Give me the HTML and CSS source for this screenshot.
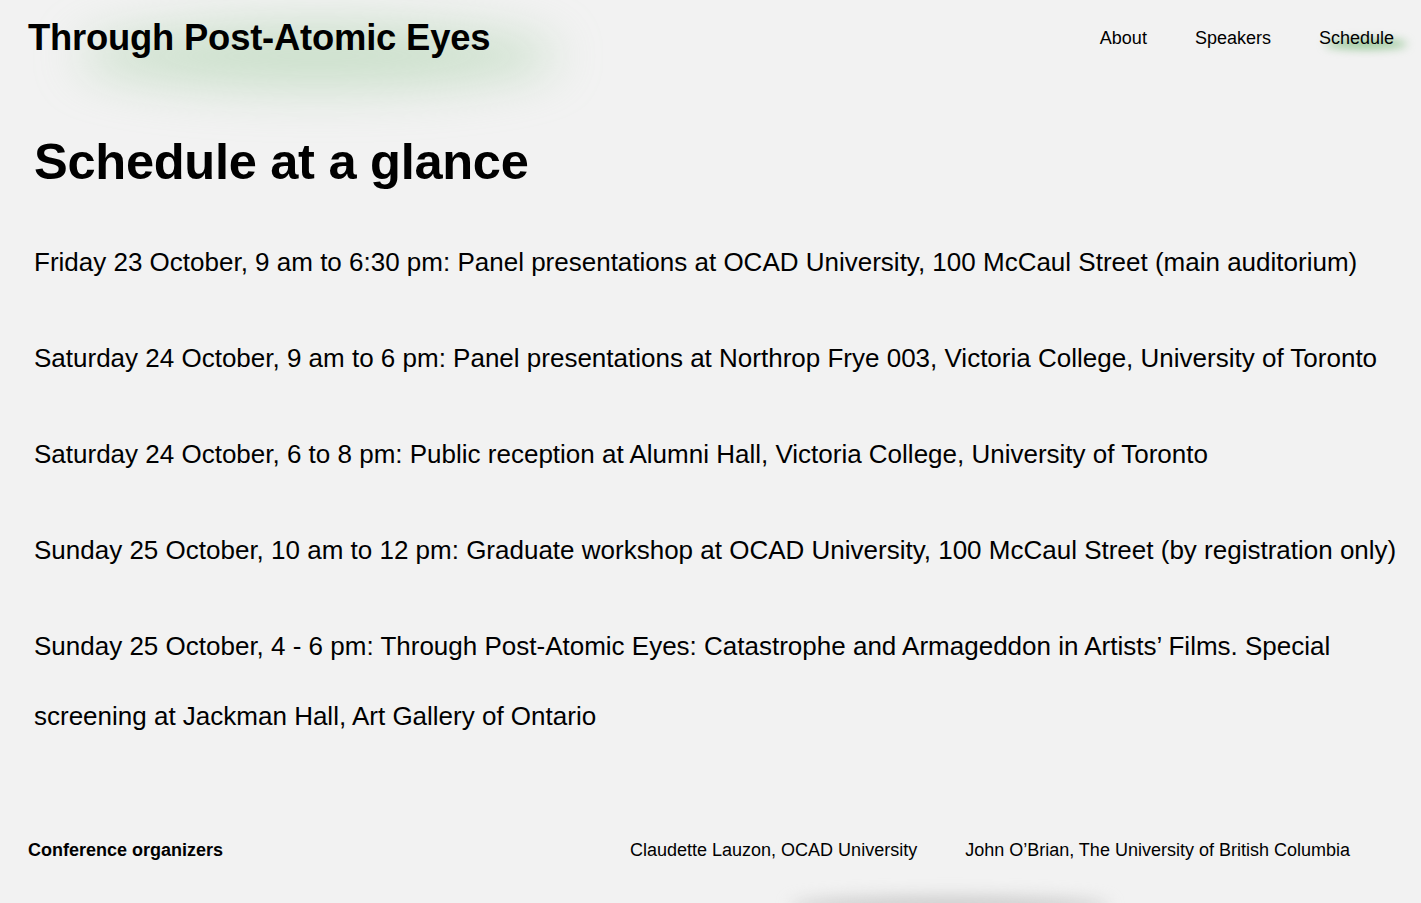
FILE: index.html
```html
<!DOCTYPE html>
<html lang="en">
<head>
<meta charset="utf-8">
<title>Schedule — Through Post-Atomic Eyes</title>
<link rel="stylesheet" href="styles.css">
</head>
<body>
<header class="site-header">
  <div class="brand">
    <span class="brand-glow"></span>
    <a class="brand-title" href="#">Through Post-Atomic Eyes</a>
  </div>
  <nav class="nav">
    <a href="#">About</a>
    <a href="#">Speakers</a>
    <a class="active" href="#"><span class="nav-glow"></span>Schedule</a>
  </nav>
</header>
<main class="content">
  <h1 class="page-title">Schedule at a glance</h1>
  <p>Friday 23 October, 9 am to 6:30 pm: Panel presentations at OCAD University, 100 McCaul Street (main auditorium)</p>
  <p>Saturday 24 October, 9 am to 6 pm: Panel presentations at Northrop Frye 003, Victoria College, University of Toronto</p>
  <p>Saturday 24 October, 6 to 8 pm: Public reception at Alumni Hall, Victoria College, University of Toronto</p>
  <p>Sunday 25 October, 10 am to 12 pm: Graduate workshop at OCAD University, 100 McCaul Street (by registration only)</p>
  <p>Sunday 25 October, 4 - 6 pm: Through Post-Atomic Eyes: Catastrophe and Armageddon in Artists’ Films. Special screening at Jackman Hall, Art Gallery of Ontario</p>
</main>
<footer class="site-footer">
  <div class="footer-label">Conference organizers</div>
  <div class="footer-names">
    <span>Claudette Lauzon, OCAD University</span>
    <span>John O’Brian, The University of British Columbia</span>
  </div>
  <span class="footer-glow"></span>
</footer>
</body>
</html>
```
FILE: styles.css
```css
html, body {
  margin: 0;
  padding: 0;
}
body {
  background: #f2f2f2;
  color: #000;
  font-family: "Liberation Sans", Arial, Helvetica, sans-serif;
  overflow: hidden;
  height: 903px;
  position: relative;
}
a {
  color: #000;
  text-decoration: none;
}
.site-header {
  display: flex;
  justify-content: space-between;
  align-items: flex-start;
  padding: 17px 27px 0 28px;
  height: 59px;
}
.brand {
  position: relative;
}
.brand-glow {
  position: absolute;
  left: 50px;
  top: 6px;
  width: 480px;
  height: 66px;
  border-radius: 50%;
  background: rgba(165, 208, 165, 0.5);
  filter: blur(24px);
  z-index: 0;
}
.brand-title {
  position: relative;
  z-index: 1;
  font-size: 36.4px;
  font-weight: 700;
  line-height: 42px;
  letter-spacing: -0.2px;
}
.nav {
  display: flex;
  gap: 48px;
  padding-top: 10px;
  font-size: 18px;
  line-height: 22px;
}
.nav a {
  position: relative;
}
.nav-glow {
  position: absolute;
  left: 6px;
  top: 12px;
  width: 82px;
  height: 10px;
  border-radius: 50%;
  background: rgba(110, 180, 110, 0.7);
  filter: blur(5px);
  z-index: -1;
}
.content {
  padding: 0 14px 0 34px;
}
.page-title {
  font-size: 50.6px;
  font-weight: 700;
  line-height: 60px;
  margin: 56px 0 35px;
  letter-spacing: -0.3px;
}
.content p {
  font-size: 26px;
  line-height: 70px;
  margin: 0 0 26px;
}
.site-footer {
  display: flex;
  align-items: baseline;
  padding: 62px 28px 0;
  font-size: 18px;
  line-height: 22px;
}
.footer-label {
  font-weight: 700;
  width: 602px;
}
.footer-names {
  display: flex;
  gap: 48px;
}
.footer-glow {
  position: absolute;
  left: 790px;
  top: 896px;
  width: 320px;
  height: 20px;
  border-radius: 50%;
  background: rgba(190, 190, 190, 0.7);
  filter: blur(8px);
}
```
